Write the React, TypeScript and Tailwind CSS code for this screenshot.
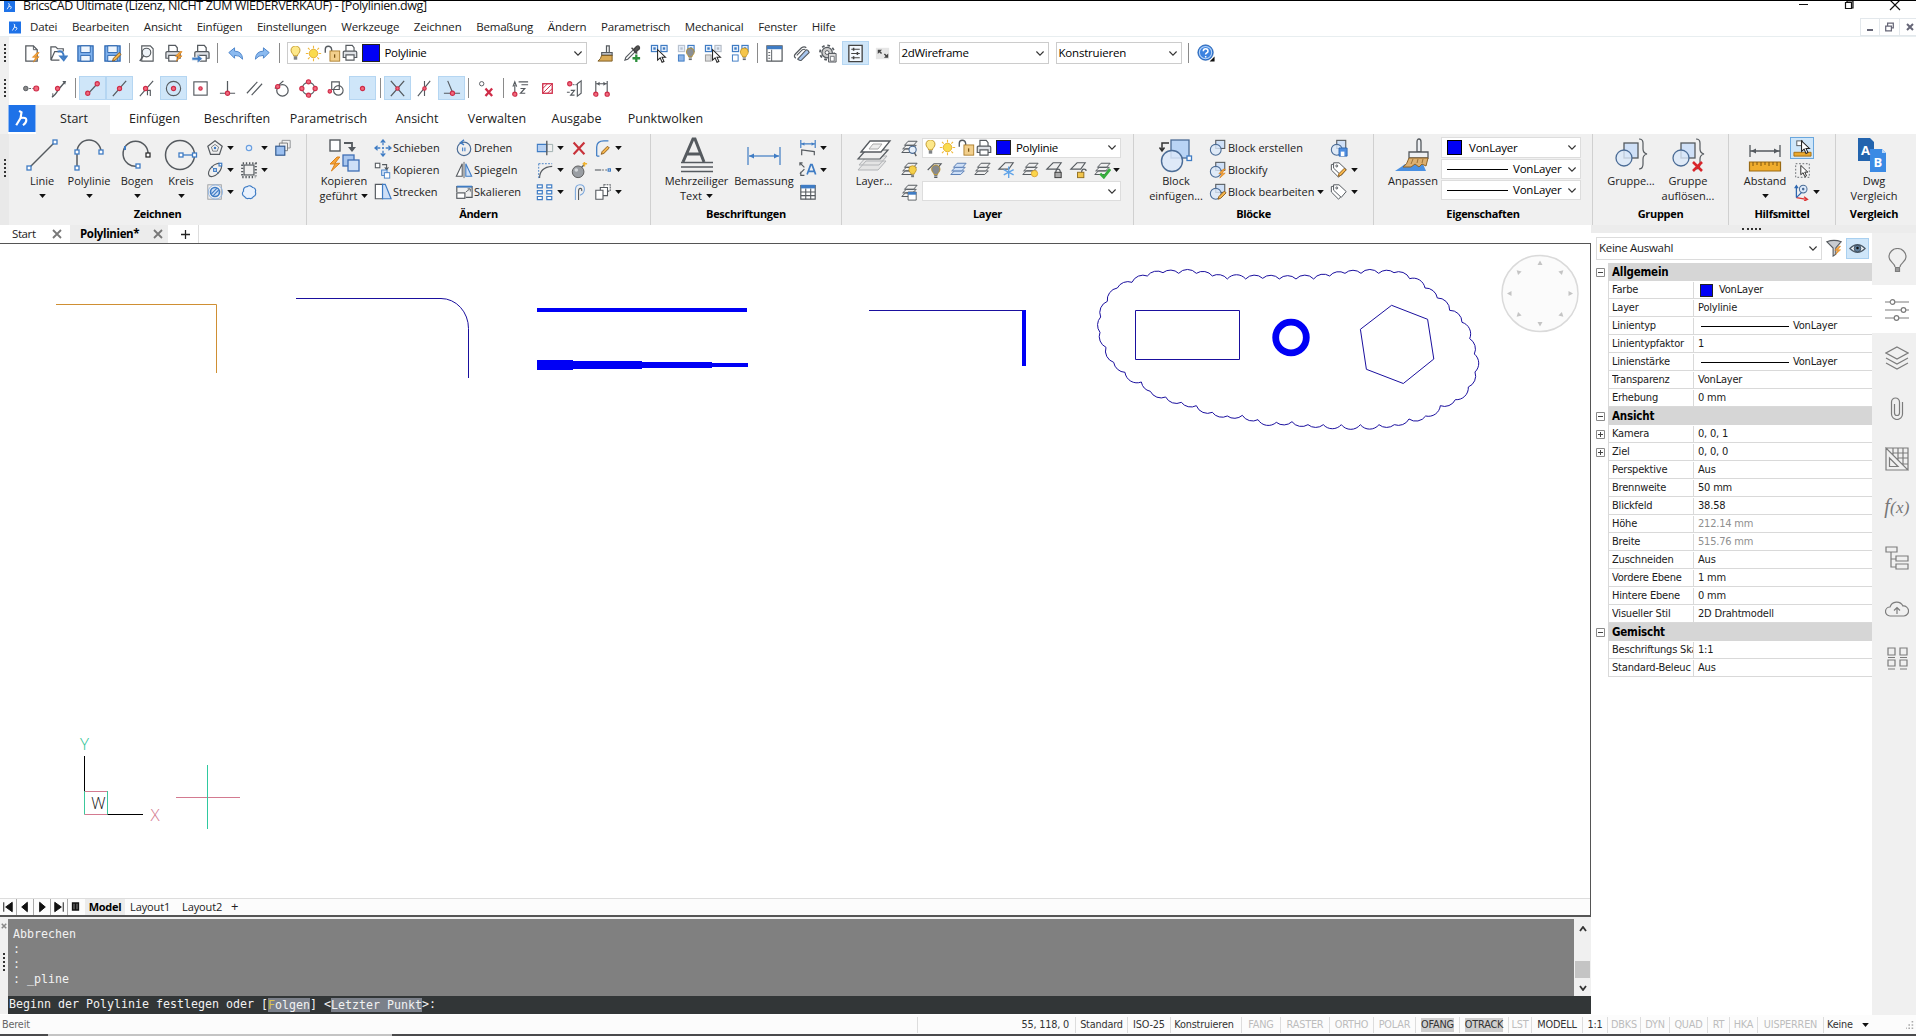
import { ReactNode } from "react";
import clsx from "clsx";

const G = "#555a5f"; // outline grey
const B = "#3f7cc4"; // accent blue
const L = "#cfe0f7"; // light fill
const R = "#cf2c48"; // snap red

const Dot = ({ x, y, r = 2.2 }: { x: number; y: number; r?: number }) => (
  <circle cx={x} cy={y} r={r} fill="#f06a7e" stroke={R} strokeWidth="1.2" />
);

const Grip = ({ x, y, s = 4 }: { x: number; y: number; s?: number }) => (
  <rect x={x - s / 2} y={y - s / 2} width={s} height={s} fill="#fff" stroke={B} strokeWidth="1.3" />
);

const Sheets = ({ c = G, fill = "none" }: { c?: string; fill?: string }) => (
  <g fill={fill} stroke={c} strokeWidth="1.1">
    <path d="M2 15l4-4h11l-4 4z" />
    <path d="M3 11l4-4h11l-4 4z" />
    <path d="M5 7l4-4.500h10l-4 4.500z" />
  </g>
);

const Bulb = ({ x = 10, y = 8, c = "#f5d04a", s = 1 }: { x?: number; y?: number; c?: string; s?: number }) => (
  <g transform={`translate(${x} ${y}) scale(${s})`}>
    <path d="M-2.200 4.500c0-2-3-3.200-3-6.500a5.200 5.200 0 0 1 10.400 0c0 3.300-3 4.500-3 6.500z" fill={c} stroke="#b98d1e" strokeWidth="1" />
    <path d="M-2 6h4M-2 8h4" stroke={G} strokeWidth="1.300" />
  </g>
);

const Cursor = ({ x = 9, y = 5 }: { x?: number; y?: number }) => (
  <path
    transform={`translate(${x} ${y})`}
    d="M0 0v11l2.700-2.400 2 4.600 2-.9-2-4.400h3.600z"
    fill="#fff"
    stroke="#222"
    strokeWidth="1.100"
  />
);

const Tiles = ({ a = B, b = B }: { a?: string; b?: string }) => (
  <g fill="#e4edf9" strokeWidth="1.200">
    <rect x="1.500" y="1.500" width="6.500" height="6.500" stroke={a} />
    <rect x="3.500" y="3.500" width="2.500" height="2.500" fill={a} stroke="none" />
    <rect x="11.500" y="1.500" width="6.500" height="6.500" stroke={b} />
    <rect x="13.500" y="3.500" width="2.500" height="2.500" fill={b} stroke="none" />
  </g>
);

const Bolt = ({ x, y, s = 1 }: { x: number; y: number; s?: number }) => (
  <path transform={`translate(${x} ${y}) scale(${s})`} d="M5 0L0 5h3.500L1 10l6-5.500H3.500L7 0z" fill="#f6a53a" stroke="#d9801a" strokeWidth=".7" />
);

const Pencil = ({ x, y }: { x: number; y: number }) => (
  <path transform={`translate(${x} ${y})`} d="M0 9l1-3 6-6 2 2-6 6z" fill="#f5b64c" stroke="#8a5a1c" strokeWidth="1" />
);

const PrinterShape = ({ x = 0, y = 0 }: { x?: number; y?: number }) => (
  <g transform={`translate(${x} ${y})`} fill="#fff" stroke={G} strokeWidth="1.300">
    <path d="M5 8V1.500h7L14 4v4" />
    <path d="M2 15V9.500Q2 8 3.500 8h12Q17 8 17 9.500V15z" fill="#dfe2e6" />
    <path d="M5 12h9v6H5z" />
  </g>
);

const Blk = () => (
  <g stroke={G} strokeWidth="1.200">
    <rect x="7.500" y="1.500" width="10" height="9" fill={L} />
    <circle cx="7.500" cy="12" r="6" fill="#dbe8f9" fillOpacity=".8" stroke="#4b6c96" />
  </g>
);

const Tag = () => (
  <g fill="#fff" stroke={G} strokeWidth="1.100">
    <path d="M1.500 4v6l8 8 6.500-7-8.500-8z" />
    <path d="M4 2v6l8.500 8 5.500-6.500L10 2z" />
    <circle cx="7.500" cy="5.500" r="1.100" />
  </g>
);

const Obj = () => (
  <>
    <rect x="11" y="6" width="14" height="15" fill={L} stroke={G} strokeWidth="1.300" />
    <circle cx="11" cy="21" r="8" fill="#dbe8f9" fillOpacity=".8" stroke="#4b6c96" strokeWidth="1.300" />
    <path d="M26 2q4 0 4 4v6q0 4 4 5-4 1-4 5v5q0 5-4 5" fill="none" stroke={G} strokeWidth="1.200" />
  </>
);

// 20x20 glyphs
const small: Record<string, ReactNode> = {
  new: (<><path d="M4 2h8l4 4v12H4z" fill="#fff" stroke={G} strokeWidth="1.300" /><path d="M12 2v4h4" fill="none" stroke={G} /><Bolt x={11} y={9} /></>),
  open: (<><path d="M2 17V3h5l2 2h6v3M2 17L6 8h8M2 17h9" fill="none" stroke={G} strokeWidth="1.300" /><path d="M9 8q7-2 6.500 7M12 13l3.500 4 3-4z" fill="none" stroke={B} strokeWidth="2" /></>),
  save: (<><path d="M2 2h16v16H2z" fill="#7fb2ee" stroke="#2c66b0" strokeWidth="1.300" /><path d="M5 2h10v7H5zM5 18v-6h10v6z" fill="#eef5fd" stroke="#2c66b0" /></>),
  saveas: (<><path d="M2 2h16v16H2z" fill="#7fb2ee" stroke="#2c66b0" strokeWidth="1.300" /><path d="M5 2h10v7H5zM5 18v-6h10v6z" fill="#eef5fd" stroke="#2c66b0" /><Pencil x={10} y={9} /></>),
  preview: (<><path d="M5 2h9l3 3v13H5z" fill="#fff" stroke={G} strokeWidth="1.200" /><circle cx="10" cy="9" r="4.500" fill="#eef3f8" stroke={G} strokeWidth="1.200" /><path d="M7 12l-4 6" stroke={G} strokeWidth="1.600" /></>),
  print: (<><PrinterShape /><Bolt x={12} y={8} /></>),
  export: (<><PrinterShape x={2} /><path d="M1 14h6v-3l5 4.500L7 20v-3H1z" fill={B} stroke="#fff" strokeWidth=".6" /></>),
  undo: <path d="M3 9l6-5v3.500q8 0 8.500 8.500-3.500-4.500-8.500-4V15z" fill="#8bbaf0" stroke="#4a83c9" strokeWidth="1" />,
  redo: <path d="M17 9l-6-5v3.500q-8 0-8.500 8.500 3.500-4.500 8.500-4V15z" fill="#8bbaf0" stroke="#4a83c9" strokeWidth="1" />,
  bulb: <Bulb x={10} y={8} c="#fde889" s={1.15} />,
  sun: (<><circle cx="10" cy="10" r="5" fill="#fadb4d" stroke="#e0a92a" /><path d="M10 1v3M10 16v3M1 10h3M16 10h3M3.500 3.500l2 2M14.500 14.500l2 2M16.500 3.500l-2 2M3.500 16.500l2-2" stroke="#f0b93c" strokeWidth="1.300" /></>),
  lock: (<><path d="M1.500 9V5q0-3.500 3.500-3.500T9 5v4" fill="none" stroke={G} strokeWidth="1.600" /><rect x="7" y="7" width="11.500" height="12" fill="#f2cf8c" stroke="#a87824" /><path d="M12.500 11v4" stroke="#7a5515" strokeWidth="1.500" /></>),
  printer: <PrinterShape x={0.5} />,
  brush: (<><path d="M11 2h3v7h-3z" fill="#eee" stroke={G} strokeWidth="1.200" /><path d="M6 9h11v3H6z" fill="#b9bdc2" stroke={G} strokeWidth="1.200" /><path d="M6 12h11v6H2q3-2 4-6z" fill="#d9aa55" stroke="#7d5b20" /></>),
  dropper: (<><path d="M2 17l1-3 8-8 2 2-8 8z" fill="#fff" stroke={G} strokeWidth="1.200" /><path d="M9 4l6 6M11 6l3-3q2-2 3 0t-1 3l-3 3z" fill="#555" stroke="#444" strokeWidth="1.500" /><path d="M14 11v8M10 15h8" stroke="#2d8f3c" strokeWidth="2.400" /></>),
  sel1: (<><Tiles /><Cursor x={8} y={6} /></>),
  sel2: (<><Tiles a="#b9c3d0" b={B} /><rect x="1.500" y="11.500" width="6" height="6.500" fill="#8db5e8" stroke={B} /><Bulb x={14} y={10} c="#8a8f95" s={0.8} /></>),
  sel3: (<><Tiles b="#b5bcc5" /><rect x="1.500" y="11.500" width="6" height="6.500" fill="#ddd" stroke="#999" /><Cursor x={9} y={6} /></>),
  sel4: (<><Tiles /><rect x="1.500" y="11.500" width="6" height="6.500" fill="#fff" stroke={B} /><Bulb x={14} y={10} c="#f5c54a" s={0.8} /></>),
  explorer: (<><path d="M2 2h16v16H2z" fill="#fff" stroke={G} strokeWidth="1.300" /><path d="M2 2h16v3.500H2z" fill={B} /><path d="M7 6v12M3.500 9h2M3.500 12h2M3.500 15h2" stroke={G} /></>),
  clip: (<><path d="M4 15q-3-2 0-5l6-6q3-2 5 0" fill="none" stroke={G} strokeWidth="1.300" /><path d="M6 16l9-10q2 0 3 3l-8 8q-2 1-4-1z" fill="#a8c6ee" stroke={G} strokeWidth="1.200" /><path d="M5 12l6-6q2-1 3 0" fill="none" stroke={G} strokeWidth="1.200" /></>),
  gear: (<><circle cx="8.500" cy="9" r="5.500" fill="#ccc" stroke={G} strokeWidth="1.300" /><circle cx="8.500" cy="9" r="7.500" fill="none" stroke={G} strokeWidth="1.800" strokeDasharray="2.900 3" /><circle cx="8.500" cy="9" r="2" fill="#fff" stroke={G} /><path d="M10 10h8v9h-8z" fill="#ddd" stroke={G} /><path d="M12 13h4v5h-4z" fill="#fff" stroke={G} strokeWidth=".8" /></>),
  props: (<><path d="M3 1.500h14v17H3z" fill="#f3f9ff" stroke="#444" strokeWidth="1.400" /><path d="M5.500 5.500h9M5.500 10h9M5.500 14.500h9" stroke="#444" strokeWidth="1.200" /><path d="M8 4v3M12 8.500v3M8 13v3" stroke="#444" strokeWidth="1.600" /></>),
  swap: (<><path d="M3 4h14v12H3z" fill="#e6e6e6" /><path d="M5 6h4.500L5 10.500zM16 14.500h-4.500L16 10z" fill="#444" /><path d="M6 7l3 3M15 13.500l-3-3" stroke="#444" strokeWidth="1.500" /></>),
  help: (<><circle cx="9.500" cy="9.500" r="8.500" fill="#3c83e0" stroke="#1f5cae" /><circle cx="9.500" cy="9.500" r="6.800" fill="none" stroke="#b9d5f7" strokeWidth="1.200" /><path d="M7 8q0-2.700 2.600-2.700T12.200 8q0 1.300-1.600 2-1 .5-1 1.800M9.600 13.300v1.600" fill="none" stroke="#fff" strokeWidth="1.700" /><path d="M19.500 14v5.500H14z" fill="#111" /></>),

  // entity snaps
  s1: (<><path d="M4 10h12" stroke={G} strokeDasharray="2 1.500" /><circle cx="4" cy="10" r="2.400" fill="#888" stroke={G} /><Dot x={15} y={10} r={2.600} /></>),
  s2: (<><path d="M3 19q3-1 7-8l6-7" fill="none" stroke={G} strokeWidth="1.400" /><path d="M14 2l4 0-1 4" fill={G} /><Dot x={9} y={10} /><path d="M4 15v4" stroke={G} /></>),
  s3: (<><path d="M5 16L15 5" stroke={G} strokeWidth="1.300" /><Dot x={5} y={15} /><Dot x={15} y={5} /></>),
  s4: (<><path d="M3 18L17 2" stroke={G} strokeWidth="1.300" /><Dot x={10} y={10} /></>),
  s5: (<><path d="M3 18L17 2M7 12h7v6M11 12v5" stroke={G} strokeWidth="1.200" fill="none" /><Dot x={9} y={10} /></>),
  s6: (<><circle cx="10" cy="10" r="7.500" fill="none" stroke={G} strokeWidth="1.200" /><Dot x={10} y={10} /></>),
  s7: (<><rect x="3" y="3" width="14" height="14" fill="none" stroke={G} strokeWidth="1.200" /><Dot x={10} y={10} r={1.800} /></>),
  s8: (<><path d="M10 2v13M2 15h16" stroke={G} strokeWidth="1.300" /><Dot x={10} y={15} /></>),
  s9: <path d="M2 15L13 3M7 17L18 5" stroke={G} strokeWidth="1.200" />,
  s10: (<><circle cx="11" cy="12" r="6" fill="none" stroke={G} strokeWidth="1.300" /><path d="M3 10l9-8" stroke={G} strokeWidth="1.300" /><Dot x={6} y={8} /></>),
  s11: (<><circle cx="10" cy="10" r="6.500" fill="none" stroke={G} strokeWidth="1.200" /><Dot x={10} y={3} /><Dot x={10} y={17} /><Dot x={3} y={10} /><Dot x={17} y={10} /></>),
  s12: (<><path d="M6 3h8v8H6z" fill="none" stroke={G} strokeWidth="1.200" /><circle cx="13" cy="12" r="5" fill="none" stroke={G} strokeWidth="1.200" /><Dot x={4} y={13} r={1.800} /></>),
  s13: <Dot x={10} y={10} />,
  s14: (<><path d="M3 2l14 16M17 2L3 18" stroke={G} strokeWidth="1.400" /><Dot x={10} y={10} r={1.800} /></>),
  s15: (<><path d="M3 18L16 2M10 2v16" stroke={G} strokeWidth="1.200" /><Dot x={10} y={10} r={1.800} /></>),
  s16: (<><path d="M6 2l5 12M2 15h17" stroke={G} strokeWidth="1.200" /><Dot x={11} y={15} /></>),
  s17: (<><circle cx="6" cy="5" r="2.300" fill="#fff" stroke={G} /><path d="M10 10l7 8M17 10l-7 8" stroke={R} strokeWidth="2.400" /></>),
  s18: (<><path d="M4 17V6M2 8l2-5 2 5M8 3h10M11 6h7M10 10h4.500l-4.500 5h5" fill="none" stroke={G} strokeWidth="1.200" /><Dot x={4} y={16} /></>),
  s19: (<><rect x="5" y="5" width="10" height="10" fill="#fff" stroke={R} strokeWidth="1.400" /><path d="M5 10l5-5M5 15L15 5M10 15l5-5" stroke={R} /></>),
  s20: (<><Dot x={5} y={5} /><path d="M8 6h6" stroke={G} strokeDasharray="2 1" /><path d="M2 14h3M6 12h4l-4 5h4M13 5l4-3v13l-4 3z" fill="none" stroke={G} strokeWidth="1.200" /></>),
  s21: (<><path d="M4 2v15M16 2v15M4 5h12" stroke={G} strokeWidth="1.200" /><path d="M5 5l3-2v4zM15 5l-3-2v4z" fill={G} /><Dot x={4} y={16} /><Dot x={16} y={16} /></>),

  // ribbon, draw
  polygon: (<><path d="M10 2l8 6-3 9H5L2 8z" fill="none" stroke={G} strokeWidth="1.300" /><path d="M10 6l4 3-1.500 4.500h-5L6 9z" fill="none" stroke={G} strokeWidth=".8" /><circle cx="10" cy="10" r="1.400" fill={B} /></>),
  ellipse: (<><ellipse cx="10" cy="10" rx="9" ry="5" transform="rotate(-45 10 10)" fill="none" stroke={G} strokeWidth="1.300" /><path d="M6 6l8 8" stroke={B} /><Grip x={10} y={10} s={3} /><Grip x={16} y={4} s={3} /></>),
  hatch: (<><rect x="2" y="2" width="15" height="16" fill="none" stroke="#9a9da1" /><circle cx="10" cy="10" r="5" fill={L} stroke={B} strokeWidth="1.800" /><path d="M6 12l6-6M8 14l6-6" stroke={B} strokeWidth="1.300" /><circle cx="10.500" cy="10" r="8" fill="none" stroke="#8fb4e4" /></>),
  point: <circle cx="10" cy="10" r="3" fill="#e6f0fc" stroke="#6a9fe0" strokeWidth="1.300" />,
  bound: (<><rect x="4.500" y="4.500" width="11" height="11" fill="none" stroke={G} strokeWidth="1.300" /><path d="M3 2.500h14.500V17" fill="none" stroke={G} strokeWidth="2.500" strokeDasharray="1.500 2" /><path d="M2.500 4v14H17" fill="none" stroke={G} strokeWidth="2.500" strokeDasharray="1.500 2" /></>),
  revcloud: <path d="M5 15a3.500 3.500 0 0 1-1-6 4 4 0 0 1 4-5 4 4 0 0 1 6 1 3.500 3.500 0 0 1 3 5 3.500 3.500 0 0 1-2 5 4 4 0 0 1-5 2 4 4 0 0 1-5-2z" fill="#eaf2fd" stroke={B} strokeWidth="1.300" />,
  region: (<><path d="M9 5V1.500h9V10h-3" fill="none" stroke="#8a8d91" /><path d="M6 8V4.500h9V13h-3" fill="none" stroke="#777" /><rect x="2" y="8" width="10" height="10" fill="#9cc0f0" stroke="#31598f" strokeWidth="1.300" /></>),

  // modify
  move: <path d="M10 1v6M10 13v6M1 10h6M13 10h6M7.500 4L10 1l2.500 3M7.500 16l2.500 3 2.500-3M4 7.500L1 10l3 2.500M16 7.500l3 2.500-3 2.500M9 10h2M10 9v2" fill="none" stroke={B} strokeWidth="1.400" />,
  copy: (<><rect x="1.500" y="2.500" width="5" height="5" fill="#fff" stroke={G} strokeWidth="1.200" /><path d="M9 4h5v5M12 7l2 3 2-3" fill="none" stroke={G} strokeWidth="1.200" /><rect x="8.500" y="10" width="6" height="6" fill={L} stroke={B} /><rect x="11.500" y="13" width="6" height="6" fill="#fff" stroke={B} /></>),
  stretch: (<><path d="M1.500 1.500h8v16h-8z" fill="#fff" stroke={G} strokeWidth="1.300" /><path d="M9.500 1.500h3l6.500 16H9.500z" fill={L} stroke={B} strokeWidth="1.300" /></>),
  rotate: (<><circle cx="10" cy="11" r="7.500" fill="none" stroke="#4b6c96" strokeWidth="1.300" /><path d="M10 1l-4 3 4 2.500" fill="none" stroke={B} strokeWidth="1.500" /><path d="M8.500 9.500v4M11 9.500v4" stroke={B} strokeWidth="1.200" /></>),
  mirror: (<><path d="M8 3v14H1.500z" fill="#fff" stroke={G} strokeWidth="1.200" /><path d="M12 3v14h6.500z" fill={L} stroke={B} strokeWidth="1.200" /><path d="M10 1v18" stroke={G} /></>),
  scale: (<><path d="M2 10V4h17v12h-7" fill="none" stroke={G} strokeWidth="1.300" /><path d="M2 3h17v2H2z" fill={B} /><rect x="2" y="11" width="9" height="6" fill="#fff" stroke={G} strokeWidth="1.300" /><path d="M12 10l4-3M14 6.500h3v3" fill="none" stroke={G} /></>),
  trim: (<><path d="M1.500 6h10.500v8H1.500z" fill="#b6d0f2" stroke={B} strokeWidth="1.200" /><path d="M12 6h6.500v8H12" fill="none" stroke="#9aa" /><path d="M12 2v16" stroke={G} strokeWidth="1.500" /></>),
  erase: <path d="M4 4l12 13M16 4L4 17" stroke="#c8323a" strokeWidth="2.400" />,
  editpl: (<><path d="M3 19V9q0-7 8-7h5M3 19h3" fill="none" stroke={B} strokeWidth="1.400" /><Pencil x={8} y={8} /></>),
  fillet: (<><path d="M4 19q0-12 14-13" fill="none" stroke={G} strokeWidth="1.300" /><path d="M3 19V3M3 3h15" stroke={B} strokeDasharray="2 1.500" /></>),
  bomb: (<><circle cx="9" cy="12" r="6.500" fill="#9a9ea3" stroke="#555" /><circle cx="7" cy="10" r="2" fill="#d4d7da" /><path d="M13 7l3-3" stroke={G} strokeWidth="1.500" /><path d="M16 1v5M14 3h5" stroke="#f1b32f" strokeWidth="1.800" /></>),
  lengthen: (<><path d="M1 10h7" stroke={G} strokeWidth="1.200" /><path d="M9 10h6" stroke={G} strokeDasharray="2 1.500" /><Grip x={17} y={10} s={2.500} /></>),
  array: (<g fill="#fff" stroke={B} strokeWidth="1.300"><path d="M1.500 2h5.500v3.500H1.500zM12 2h5.500v3.500H12zM1.500 8.500h5.500V12H1.500zM12 8.500h5.500V12H12zM1.500 15h5.500v3.500H1.500zM12 15h5.500v3.500H12z" /></g>),
  offset: (<><path d="M6 19V8q0-6 5-6t5 5q0 5-5 6.500" fill="none" stroke="#7ba7dc" strokeWidth="1.200" /><path d="M9.500 19V9q0-3 2-3t1.500 3" fill="none" stroke={G} strokeWidth="1.200" /></>),
  order: (<g fill="#fff" stroke={G} strokeWidth="1.200"><path d="M11 2h7v7h-7z" strokeDasharray="2 1" /><path d="M7 5h8v9H7z" /><path d="M2 8h8v10H2z" /></g>),

  // annotate
  dimlin: (<><path d="M2 1v9M18 1v9M2 5.500h16" stroke={B} strokeWidth="1.300" /><path d="M3 5.500l3-2v4zM17 5.500l-3-2v4z" fill={B} /><path d="M3 18v-6l14 2v4" fill="none" stroke={G} strokeWidth="1.300" /></>),
  scaletext: (<><path d="M1 5V2h3M1 2l5 5M1 14l5-5M6 16H2v-4" stroke={G} fill="none" strokeWidth="1.300" /><path d="M9 15l4-11h1.500l4 11M10.500 11.500h6.500" stroke={B} strokeWidth="1.900" fill="none" /></>),
  table: (<><path d="M2 3h16v15H2z" fill="#fff" stroke={G} strokeWidth="1.300" /><path d="M2 2h16v4H2z" fill={B} /><path d="M2 10h16M2 14h16M7.500 6v12M13 6v12" stroke={G} strokeWidth="1.200" /></>),

  // layers
  lprev: (<><Sheets /><circle cx="14" cy="12" r="4" fill="#e7f0fb" stroke="#4b6c96" strokeWidth="1.200" /><path d="M16 15l2 4" stroke={G} strokeWidth="1.500" /></>),
  lstate: (<><Sheets /><path d="M9 10h9v9H9z" fill="#fff" stroke={G} /><path d="M9 10h9v3H9z" fill={B} /></>),
  lon: (<><Sheets /><Bulb x={14} y={11} s={0.8} /></>),
  loff: (<><path d="M3 10l7-7h8l-4 5" fill="none" stroke={G} strokeWidth="1.200" /><Bulb x={12} y={11} c="#85898e" s={0.9} /></>),
  liso: <Sheets c="#5b7fb5" fill="#cfe0f7" />,
  luniso: <Sheets fill="#f0f0f0" />,
  lfreeze: (<><path d="M2 9l7-7h9l-5 7z" fill="none" stroke={G} strokeWidth="1.200" /><path d="M13 6v13M7.500 9.500l11 6M18.500 9.500l-11 6" stroke="#5fa3e8" strokeWidth="1.500" /></>),
  lthaw: (<><Sheets /><circle cx="15" cy="14" r="3.500" fill="#fbd54b" stroke="#dba22c" /></>),
  llock: (<><path d="M2 9l7-7h9l-5 7z" fill="none" stroke={G} strokeWidth="1.200" /><path d="M12 13q0-4 2.500-4t2.500 4" fill="none" stroke={G} strokeWidth="1.300" /><rect x="11" y="12.500" width="7" height="6" fill="#aaa" stroke="#333" /></>),
  lunlock: (<><path d="M2 9l7-7h9l-5 7z" fill="none" stroke={G} strokeWidth="1.200" /><path d="M14 13q0-4 2.500-4t2.500 2" fill="none" stroke={G} strokeWidth="1.300" /><rect x="9.500" y="12.500" width="7" height="6" fill="#f2c54c" stroke="#8d6a1c" /></>),
  lcur: (<><Sheets /><path d="M8 14l4 4 7-9" fill="none" stroke="#35ad3c" strokeWidth="3" /></>),

  // blocks
  bcreate: <Blk />,
  blockify: (<><Blk /><Bolt x={11} y={9} /></>),
  bedit: (<><Blk /><Pencil x={10} y={9} /></>),
  bsave: (<><Blk /><path d="M10 10h9v9h-9z" fill="#4f8ee0" stroke="#2c66b0" /><path d="M12 14h4v5h-4z" fill="#fff" /></>),
  tagedit: (<><Tag /><Pencil x={9} y={8} /></>),
  tag: <Tag />,

  // utilities
  quick: (<><rect x="4" y="2" width="6" height="5" fill="#fff" stroke={G} /><path d="M1 14h18v4H1z" fill="#eaa92f" stroke="#a86f11" /><Cursor x={9} y={2} /></>),
  selbox: (<><path d="M2 2h16v16H2z" fill="none" stroke={G} strokeDasharray="2 2" /><Cursor x={8} y={4} /></>),
  ucs: (<><path d="M4 3v13M2 5l2-3 2 3" fill="none" stroke="#2c66b0" strokeWidth="1.500" /><path d="M4 16l12 2M13 15l4 3-4 2" fill="none" stroke="#d33" strokeWidth="1.600" /><path d="M4 16l6-6" stroke="#2c66b0" strokeWidth="1.300" /><circle cx="12" cy="6" r="4.500" fill="#dce9fa" stroke="#4b6c96" strokeWidth="1.200" /><circle cx="12" cy="6" r="1.500" fill="#4b6c96" /></>),
  filter: (<><path d="M2 3q8-3 16 0l-6 7v7l-3 2v-9z" fill="#c9ccd0" stroke={G} strokeWidth="1.200" /><Bolt x={11} y={8} s={0.9} /></>),
  eye: (<><path d="M1 10q9-9 18 0-9 9-18 0z" fill="#f4f8fc" stroke="#4c5a68" strokeWidth="1.300" /><circle cx="10" cy="10" r="4" fill="#5f7d9a" stroke="#3a4a5a" /><circle cx="10" cy="9.500" r="1.500" fill="#111" /></>),
};

// 36x36 glyphs
const big: Record<string, ReactNode> = {
  line: (<><path d="M5 31L31 5" stroke={G} strokeWidth="1.500" /><Grip x={5} y={31} /><Grip x={31} y={5} /></>),
  pline: (<><path d="M6 31V15a12 12 0 0 1 24 0" fill="none" stroke={G} strokeWidth="1.500" /><Grip x={6} y={31} /><Grip x={6} y={15} /><Grip x={30} y={15} /></>),
  arc: (<><path d="M19 29A12.500 12.500 0 1 1 29 18" fill="none" stroke={G} strokeWidth="1.500" /><Grip x={19} y={29} /><rect x="27" y="16" width="4" height="4" fill="#fff" stroke="#222" strokeWidth="1.200" /><path d="M6 9v4" stroke={B} strokeWidth="2" /></>),
  circle: (<><circle cx="17" cy="18" r="14.500" fill="none" stroke={G} strokeWidth="1.500" /><path d="M18 18h14" stroke={B} strokeWidth="1.300" /><Grip x={18} y={18} /><Grip x={31.5} y={18} /></>),
  copyg: (<><rect x="4" y="3" width="10" height="11" fill="#fff" stroke={G} strokeWidth="1.400" /><path d="M18 6h8v6" fill="none" stroke={G} strokeWidth="1.800" /><path d="M22 10h8l-4 5z" fill={G} /><rect x="17" y="18" width="11" height="11" fill="#a8c6ee" stroke="#3f6fb5" strokeWidth="1.300" /><rect x="22" y="23" width="11" height="11" fill={L} stroke="#3f6fb5" strokeWidth="1.300" /><Bolt x={4} y={20} s={1.400} /></>),
  mtext: (<><path d="M4 25L14 2h2l9 23M8 17h14" fill="none" stroke={G} strokeWidth="3" /><path d="M2 25.500h32M2 30h32M2 34.500h32" stroke={G} strokeWidth="1.300" /></>),
  dim: (<><path d="M2 10v18M34 10v18" stroke={B} strokeWidth="1.200" /><path d="M3 19h30" stroke={B} strokeWidth="1.200" /><path d="M3 19l5-2.500v5zM33 19l-5-2.500v5z" fill={B} /></>),
  layers: (<><g fill="#e4e4e4" stroke="#b2b4b7"><path d="M2 33l8-9h20l-8 9zM3 28l8-9h20l-8 9z" /></g><path d="M2 22l8-9h22l-8 9z" fill="#f0f0f0" stroke={G} strokeWidth="1.200" /><path d="M5 15l9-11h20l-9 11z" fill="#fff" stroke={G} strokeWidth="1.300" /><path d="M13 12l4-5h9l-4 5z" fill="#ededed" stroke="#aaa" /></>),
  insert: (<><rect x="13" y="3" width="18" height="18" fill="#b9d4f5" stroke="#4b6c96" strokeWidth="1.300" /><circle cx="14" cy="24" r="10.500" fill="#dbe8f9" fillOpacity=".85" stroke="#4b6c96" strokeWidth="1.400" /><path d="M11 6H4v7M1.500 10.500L4 14l2.500-3.500" fill="none" stroke="#333" strokeWidth="1.500" /><rect x="29" y="19" width="4.500" height="4.500" fill="#fff" stroke={B} strokeWidth="1.300" /></>),
  match: (<><path d="M0 34h31l-3-7H10l-4 3z" fill="#4a90e2" /><path d="M22 5q0-3 2-3t2 3v10h-4z" fill="#eef0f3" stroke={G} strokeWidth="1.300" /><path d="M14 15h19v6H14z" fill="#eef0f3" stroke={G} strokeWidth="1.300" /><path d="M14 21h19l-2 8-4-2-3 3-4-3-4 3H8q4-2 6-9z" fill="#ddb070" stroke="#8d6327" /><path d="M18 22l-2 5M23 22l-1 4M28 22l-1 4" stroke="#8d6327" strokeWidth=".8" /></>),
  group: <Obj />,
  ungroup: (<><Obj /><path d="M23 25l9 9M32 25l-9 9" stroke="#d9252a" strokeWidth="2.600" /></>),
  measure: (<><path d="M3 8v12M33 8v12M3 14h30" stroke={G} strokeWidth="1.300" /><path d="M4 14l5-2.500v5zM32 14l-5-2.500v5z" fill={G} /><path d="M2.500 25h31v9h-31z" fill="#f0ad2d" stroke="#9a6a14" strokeWidth="1.200" /><path d="M6 25v4M10 25v3M14 25v4M18 25v3M22 25v4M26 25v3M30 25v4" stroke="#7d5510" /></>),
  compare: (<><path d="M2 1h12l4 4v19H2z" fill="#2364ae" /><path d="M14 12h12l4 4v19H14z" fill="#3b8ae4" /><path d="M26 12v4h4z" fill="#bcd8f8" /><g fill="#fff" fontFamily="Open Sans, sans-serif" fontWeight="700" fontSize="13"><text x="5" y="18">A</text><text x="17.500" y="30">B</text></g></>),
};

const Icon = ({ n, className = "size-5" }: { n: string; className?: string }) => (
  <svg viewBox="0 0 20 20" className={clsx("shrink-0", className)}>{small[n]}</svg>
);

const Caret = ({ className = "" }: { className?: string }) => (
  <svg viewBox="0 0 10 6" className={clsx("h-[4px] w-[7px] shrink-0", className)}><path d="M0 0h10L5 6z" fill="#111" /></svg>
);

const Chevron = () => (
  <svg viewBox="0 0 10 6" className="mr-1 h-[5px] w-2 shrink-0"><path d="M.5.5L5 5 9.500.5" fill="none" stroke="#333" strokeWidth="1.400" /></svg>
);

const Logo = ({ className }: { className: string }) => (
  <svg viewBox="0 0 28 28" className={clsx("shrink-0", className)}>
    <path d="M0 0h28v28H0z" fill="#1e72e8" />
    <path d="M11 6l2.500 1.500-1 6L8 21M12.500 13.500q6-1 6 2 0 3-3.500 5.500" fill="none" stroke="#fff" strokeWidth="2.200" />
  </svg>
);

const Sep = ({ className }: { className: string }) => (
  <div className={clsx("flex shrink-0 justify-center", className)}><div className="h-5 w-px bg-[#8a8a8a]" /></div>
);

const Tools = ({ items, active = [] }: { items: string[]; active?: string[] }) => (
  <>
    {items.map((n) => (
      <div
        key={n}
        className={clsx(
          "flex h-[24px] w-[27px] shrink-0 items-center justify-center border",
          active.includes(n) ? "border-[#b5d6f2] bg-[#cfe6f9]" : "border-transparent"
        )}
      >
        <Icon n={n} className="size-[19px]" />
      </div>
    ))}
  </>
);

const DotsV = ({ className = "" }: { className?: string }) => (
  <div className={clsx("w-0 border-l-2 border-dotted border-[#333]", className)} />
);

const menu = ["Datei", "Bearbeiten", "Ansicht", "Einfügen", "Einstellungen", "Werkzeuge", "Zeichnen", "Bemaßung", "Ändern", "Parametrisch", "Mechanical", "Fenster", "Hilfe"];

const MenuBar = () => (
  <div className="flex h-[18px] items-center pl-[9px] text-[11.5px] tracking-[-0.17px] text-[#222]">
    <Logo className="mr-[9px] h-[15px] w-3" />
    <div className="flex gap-[14.6px] pb-px">
      {menu.map((m) => <span key={m}>{m}</span>)}
    </div>
    <div className="ml-auto flex h-full divide-x divide-[#e3e8ec] border border-r-0 border-[#e3e8ec]">
      <div className="flex w-[19px] items-end justify-center pb-1"><div className="h-0.5 w-1.5 bg-[#667]" /></div>
      <svg viewBox="0 0 20 16" className="w-[20px]"><path d="M6 7h6v5H6zM8 7V4h6v5h-2" fill="none" stroke="#667" strokeWidth="1.300" /></svg>
      <svg viewBox="0 0 16 16" className="w-[16px]"><path d="M7 5l6 6M13 5l-6 6" stroke="#667" strokeWidth="2" /></svg>
    </div>
  </div>
);

const LayerState = ({ wide }: { wide?: boolean }) => (
  <>
    <Icon n="bulb" className={wide ? "w-[15px]" : "w-[15px]"} />
    <Icon n="sun" className={wide ? "ml-0.5 w-[17px]" : "ml-px w-[17px]"} />
    <Icon n="lock" className={wide ? "ml-0.5 w-[17px]" : "ml-0.5 w-[17px]"} />
    <Icon n="printer" className="w-[18px]" />
    <div className={clsx("shrink-0 border border-[#222] bg-[#0000f5]", wide ? "ml-[3px] h-[18px] w-[18px]" : "ml-[3px] h-[15px] w-[15px]")} />
  </>
);

const Toolbars = () => (
  <div className="flex h-[69px] border-t border-[#e8eef0]">
    <div className="flex w-[9px] shrink-0 flex-col items-center gap-[17px] bg-[#f0f0f0] pt-[7px]">
      <DotsV className="h-[18px]" />
      <DotsV className="h-[18px]" />
    </div>
    <div className="flex flex-col pl-[8.5px] text-[11.5px] tracking-[-0.3px] text-black">
      <div className="flex h-[32px] shrink-0 items-center">
        <Tools items={["new", "open", "save", "saveas"]} />
        <Sep className="w-[7px]" />
        <Tools items={["preview", "print", "export"]} />
        <Sep className="w-2" />
        <Tools items={["undo", "redo"]} />
        <Sep className="w-[8px]" />
        <div className="ml-[3px] flex h-[22px] w-[300px] items-center border border-[#ccc] bg-white">
          <LayerState wide />
          <span className="ml-[5px] flex-1">Polylinie</span>
          <Chevron />
        </div>
        <div className="ml-[5px] flex items-center">
          <Tools items={["brush", "dropper", "sel1", "sel2", "sel3", "sel4"]} />
          <Sep className="w-[7px]" />
          <Tools items={["explorer", "clip", "gear", "props"]} active={["props"]} />
          <Tools items={["swap"]} />
        </div>
        <div className="ml-[3px] flex h-[22px] w-[150px] items-center border border-[#ccc] bg-white pl-0.5">
          <span className="flex-1">2dWireframe</span>
          <Chevron />
        </div>
        <div className="ml-[7px] flex h-[22px] w-[126px] items-center border border-[#ccc] bg-white pl-0.5 tracking-[-0.200px]">
          <span className="flex-1">Konstruieren</span>
          <Chevron />
        </div>
        <Sep className="w-[13px]" />
        <Icon n="help" className="ml-[2px] size-[18px]" />
      </div>
      <div className="flex h-[38px] shrink-0 items-center">
        <Tools items={["s1", "s2"]} />
        <Sep className="w-[7.5px]" />
        <Tools items={["s3", "s4", "s5", "s6", "s7", "s8", "s9", "s10", "s11", "s12", "s13"]} active={["s3", "s4", "s6", "s13"]} />
        <Sep className="w-[8px]" />
        <Tools items={["s14", "s15", "s16"]} active={["s14", "s16"]} />
        <Sep className="w-[7px]" />
        <Tools items={["s17"]} />
        <Sep className="w-[8px]" />
        <Tools items={["s18", "s19", "s20", "s21"]} />
      </div>
    </div>
  </div>
);

const ribbonTabs: [string, string][] = [
  ["Start", "w-[74px] bg-[#f0f0f0] pl-0.5"],
  ["Einfügen", "w-[89px]"],
  ["Beschriften", "w-[76px]"],
  ["Parametrisch", "w-[107px]"],
  ["Ansicht", "w-[70px]"],
  ["Verwalten", "w-[90px]"],
  ["Ausgabe", "w-[69px]"],
  ["Punktwolken", "w-[109px]"],
];

const Big = ({ icon, label, label2, caret, className }: { icon: string; label: string; label2?: string; caret?: boolean; className: string }) => (
  <div className={clsx("flex shrink-0 flex-col items-center leading-[15px] whitespace-nowrap", className)}>
    <svg viewBox="0 0 36 36" className="size-9 shrink-0">{big[icon]}</svg>
    <span>{label}</span>
    {(label2 || caret) && (
      <span className="flex h-[15px] items-center gap-1">
        {label2}
        {caret && <Caret />}
      </span>
    )}
  </div>
);

type Cell = { i?: string; t?: string; caret?: boolean };

const Col = ({ cells, className }: { cells: Cell[]; className: string }) => (
  <div className={clsx("flex shrink-0 flex-col", className)}>
    {cells.map((c, k) => (
      <div key={k} className="flex h-[22px] items-center whitespace-nowrap">
        {c.i && <Icon n={c.i} className="size-[18px]" />}
        {c.t && <span className="ml-px">{c.t}</span>}
        {c.caret && <Caret className="ml-[3px]" />}
      </div>
    ))}
  </div>
);

const Panel = ({ title, className, pad, children }: { title: string; className: string; pad: string; children: ReactNode }) => (
  <div className={clsx("flex shrink-0 flex-col border-r border-[#d0d0d0] pt-[3px]", className)}>
    <div className={clsx("flex h-[67px]", pad)}>{children}</div>
    <div className="text-center text-[11px] leading-[19px] font-bold tracking-[-0.3px] text-black">{title}</div>
  </div>
);

const Ribbon = () => (
  <div className="flex h-[91px] bg-[#f0f0f0] text-[11px] text-[#222]">
    <div className="flex w-[9px] shrink-0 items-center justify-center bg-[#e9e9e9] pb-6"><DotsV className="h-[18px]" /></div>
    <Panel title="Zeichnen" className="w-[298px]" pad="pl-[10px]">
      <Big icon="line" label="Linie" caret className="w-[46px]" />
      <Big icon="pline" label="Polylinie" caret className="w-[48px]" />
      <Big icon="arc" label="Bogen" caret className="w-[48px]" />
      <Big icon="circle" label="Kreis" caret className="w-[40px]" />
      <Col className="ml-[5px] w-[34px]" cells={[{ i: "polygon", caret: true }, { i: "ellipse", caret: true }, { i: "hatch", caret: true }]} />
      <Col className="w-[34px]" cells={[{ i: "point", caret: true }, { i: "bound", caret: true }, { i: "revcloud" }]} />
      <Col className="w-5" cells={[{ i: "region" }]} />
    </Panel>
    <Panel title="Ändern" className="w-[344px]" pad="pl-3">
      <Big icon="copyg" label="Kopieren" label2="geführt" caret className="w-[50px]" />
      <Col className="ml-[5px] w-[81px]" cells={[{ i: "move", t: "Schieben" }, { i: "copy", t: "Kopieren" }, { i: "stretch", t: "Strecken" }]} />
      <Col className="w-[81px]" cells={[{ i: "rotate", t: "Drehen" }, { i: "mirror", t: "Spiegeln" }, { i: "scale", t: "Skalieren" }]} />
      <Col className="w-[34px]" cells={[{ i: "trim", caret: true }, { i: "fillet", caret: true }, { i: "array", caret: true }]} />
      <Col className="w-[24px]" cells={[{ i: "erase" }, { i: "bomb" }, { i: "offset" }]} />
      <Col className="w-[34px]" cells={[{ i: "editpl", caret: true }, { i: "lengthen", caret: true }, { i: "order", caret: true }]} />
    </Panel>
    <Panel title="Beschriftungen" className="w-[191px]" pad="pl-[12px]">
      <Big icon="mtext" label="Mehrzeiliger" label2="Text" caret className="w-[67px]" />
      <Big icon="dim" label="Bemassung" className="w-[68px]" />
      <Col className="ml-px w-[34px]" cells={[{ i: "dimlin", caret: true }, { i: "scaletext", caret: true }, { i: "table" }]} />
    </Panel>
    <Panel title="Layer" className="w-[292px]" pad="pl-[12px]">
      <Big icon="layers" label="Layer..." className="w-[40px]" />
      <Col className="ml-[6px] w-[22px]" cells={[{ i: "lprev" }, { i: "lon" }, { i: "lstate" }]} />
      <div className="flex w-[199px] flex-col">
        <div className="flex h-[22px] items-center pb-px">
          <div className="flex h-5 w-full items-center border border-[#ddd] bg-white text-[11.500px] tracking-[-0.3px] text-black">
            <LayerState />
            <span className="ml-[5px] flex-1">Polylinie</span>
            <Chevron />
          </div>
        </div>
        <div className="flex h-[22px] items-center gap-[6px] pl-[3px]">
          {["loff", "liso", "luniso", "lfreeze", "lthaw", "llock", "lunlock", "lcur"].map((n) => <Icon key={n} n={n} className="size-[18px]" />)}
          <Caret className="-ml-1" />
        </div>
        <div className="flex h-5 items-center justify-end border border-[#ddd] bg-white"><Chevron /></div>
      </div>
    </Panel>
    <Panel title="Blöcke" className="w-[240px]" pad="pl-[14px]">
      <Big icon="insert" label="Block" label2="einfügen..." className="w-[56px]" />
      <Col className="ml-[5px] w-[121px]" cells={[{ i: "bcreate", t: "Block erstellen" }, { i: "blockify", t: "Blockify" }, { i: "bedit", t: "Block bearbeiten", caret: true }]} />
      <Col className="w-[34px]" cells={[{ i: "bsave" }, { i: "tagedit", caret: true }, { i: "tag", caret: true }]} />
    </Panel>
    <Panel title="Eigenschaften" className="w-[219px]" pad="pl-[13px]">
      <Big icon="match" label="Anpassen" className="w-[52px]" />
      <div className="ml-0.5 flex w-[140px] flex-col gap-px text-[11.5px] text-black">
        <div className="flex h-[21px] items-center border border-[#ddd] bg-white pl-[5px]">
          <div className="size-[15px] border border-black bg-[#0000f5]" />
          <span className="ml-[7px] flex-1 tracking-[-0.2px]">VonLayer</span>
          <Chevron />
        </div>
        {[0, 1].map((k) => (
          <div key={k} className="flex h-5 items-center border border-[#ddd] bg-white pl-[5px]">
            <div className="h-px w-[61px] bg-black" />
            <span className="ml-[5px] flex-1 tracking-[-0.2px]">VonLayer</span>
            <Chevron />
          </div>
        ))}
      </div>
    </Panel>
    <Panel title="Gruppen" className="w-[136px]" pad="pl-[11px]">
      <Big icon="group" label="Gruppe..." className="w-[54px]" />
      <Big icon="ungroup" label="Gruppe" label2="auflösen..." className="w-[60px]" />
    </Panel>
    <Panel title="Hilfsmittel" className="w-[107px]" pad="pl-[13px]">
      <Big icon="measure" label="Abstand" caret className="w-[46px]" />
      <div className="ml-0.5 flex w-[36px] flex-col">
        <div className="flex h-[22px] w-6 items-center justify-center border border-[#6aa7de] bg-[#cfe6f9]"><Icon n="quick" className="size-[19px]" /></div>
        <div className="flex h-[22px] w-6 items-center justify-center"><Icon n="selbox" className="size-[17px]" /></div>
        <div className="flex h-[22px] items-center pl-[3px]"><Icon n="ucs" className="size-[17px]" /><Caret className="ml-[3px]" /></div>
      </div>
    </Panel>
    <Panel title="Vergleich" className="w-[80px] border-r-0 pr-1" pad="">
      <Big icon="compare" label="Dwg" label2="Vergleich" className="w-full" />
    </Panel>
  </div>
);

const CloseX = () => (
  <svg viewBox="0 0 10 10" className="w-[10px] shrink-0"><path d="M1 1l8 8M9 1L1 9" stroke="#777" strokeWidth="1.800" /></svg>
);

const DocTabs = () => (
  <div className="flex h-[18px] items-center bg-white text-[11.5px] tracking-[-0.4px] text-[#222]">
    <span className="w-[52px] pl-[12px]">Start</span>
    <CloseX />
    <div className="ml-[8px] flex h-full w-[98px] items-center bg-[#ececec] pl-[10px] font-bold tracking-[-0.350px] text-black">
      <span className="w-[73px]">Polylinien*</span>
      <CloseX />
    </div>
    <div className="flex h-full w-[31px] items-center justify-center border-r border-[#ddd] pl-1">
      <svg viewBox="0 0 10 10" className="size-[9px]"><path d="M5 0v10M0 5h10" stroke="#222" strokeWidth="1.400" /></svg>
    </div>
  </div>
);

// cusps of the revision cloud, in thirds of a pixel
const cusps = [
  [132, 73], [178, 54], [225, 44], [272, 46], [325, 46], [373, 54], [418, 63], [473, 63], [524, 61], [574, 63], [624, 63],
  [677, 63], [725, 54], [771, 46], [819, 46], [872, 46], [918, 44], [965, 62], [1011, 90], [1048, 120], [1085, 157],
  [1122, 193], [1145, 242], [1159, 288], [1161, 342], [1141, 387], [1102, 425], [1057, 443], [1013, 474], [963, 483],
  [919, 500], [873, 500], [817, 500], [760, 500], [706, 500], [660, 500], [612, 491], [565, 493], [510, 485], [463, 472],
  [418, 474], [373, 463], [325, 443], [280, 433], [233, 417], [187, 400], [160, 372], [111, 343], [77, 313], [54, 268],
  [36, 223], [38, 177], [58, 130], [88, 90],
];
const cloud = cusps.map(([x, y], i) => (i ? `A36 36 0 0 1 ${x} ${y}` : `M${x} ${y}`)).join("") + "A36 36 0 0 1 132 73Z";

const Drawing = () => (
  <svg viewBox="0 244 1590 654" className="h-[654px] w-[1590px]" fill="none" stroke="#1a0f9e">
    <path d="M56 304.500h160.500V373" stroke="#cf8f33" />
    <path d="M296 298.500h145a27.500 30 0 0 1 27.500 30V378" />
    <g fill="#0000f5" stroke="none">
      <path d="M537 308h210v4H537z" />
      <path d="M537 360h36v1h69v1h70v1h36v4h-36v1h-70v1h-69v1h-36z" />
      <path d="M1022 310h4v56h-4z" />
    </g>
    <path d="M869 310.500h154M1135.500 310.500h104v49h-104z" />
    <circle cx="1291" cy="337.500" r="15.300" stroke="#0000f5" strokeWidth="6.800" />
    <path d="M1391.600 305.300l36 14 6.200 39.700-30.500 24.500-36.900-14.200-6-40z" />
    <g transform="translate(1088 258) scale(.33333)"><path d={cloud} strokeWidth="3" /></g>

    {/* view rotation widget */}
    <circle cx="1540" cy="293.500" r="38" fill="#fbfbfb" stroke="#dadada" strokeWidth="1.500" />
    {[0, 45, 90, 135, 180, 225, 270, 315].map((a) => (
      <path key={a} transform={`rotate(${a} 1540 293.500)`} d="M1540 260.500l2.500 4.500h-5z" fill="#c4c4c4" stroke="none" />
    ))}

    {/* ucs icon */}
    <path d="M84.500 756v35M107 814.500h36" stroke="#000" />
    <path d="M84.500 791.500h23M84.500 814.500h23" stroke="#d37a90" />
    <path d="M84.500 791v23.500M107.500 791v23.500" stroke="#3cc79b" />
    <g stroke="none" fontFamily="Open Sans, sans-serif" fontSize="17" fontWeight="300" textAnchor="middle">
      <text x="84.500" y="749.500" fill="#2fc495">Y</text>
      <text x="98.500" y="809" fontSize="16" fill="#111">W</text>
      <text x="155" y="820.500" fill="#d37a90">X</text>
    </g>
    <path d="M176 797.500h64" stroke="#d37a90" />
    <path d="M207.500 765v64" stroke="#2fc9a0" />
  </svg>
);

const navPaths = ["M4 3v10M13 3v10L6 8z", "M11 3v10L5 8z", "M6 3v10l6-5z", "M13 3v10M4 3v10l7-5z"];

const ModelTabs = () => (
  <div className="flex h-[17px] items-center border-t border-[#ddd] bg-[#fcfcfc] text-[11px] tracking-[-0.1px] text-[#222]">
    {navPaths.map((d) => (
      <svg key={d} viewBox="0 0 17 16" className="h-4 w-[17px] border-r border-[#aaa]"><path d={d} fill="#111" stroke="#111" /></svg>
    ))}
    <svg viewBox="0 0 17 16" className="h-4 w-[17px]"><path d="M4.500 4h6v7h-6zM7.500 4v7" fill="#555" stroke="#111" strokeWidth="1.300" /></svg>
    <span className="flex h-full w-[40px] items-center justify-center bg-[#ececec] font-bold tracking-[-0.3px] text-black">Model</span>
    <span className="w-[52px] pl-[5px]">Layout1</span>
    <span className="w-[54px] pl-[5px]">Layout2</span>
    <span className="text-[13px]">+</span>
  </div>
);

const CommandLine = () => (
  <div className="flex h-[99px] border-t-2 border-[#555] bg-[#f0f0f0] font-['DejaVu_Sans_Mono',monospace] text-[11.630px]">
    <div className="flex w-2 shrink-0 flex-col items-center pt-1.5">
      <svg viewBox="0 0 8 8" className="size-[6px]"><path d="M1 1l6 6M7 1L1 7" stroke="#888" strokeWidth="2" /></svg>
      <DotsV className="mt-[24px] h-[18px]" />
    </div>
    <div className="flex flex-1 flex-col pt-[2px]">
      <div className="flex h-[77px]">
        <div className="flex-1 bg-[#808080] pt-[8px] pl-[5px] leading-[15px] whitespace-pre text-[#f2f2f2]">
          <div>Abbrechen</div>
          <div>:</div>
          <div>:</div>
          <div>: _pline</div>
        </div>
        <div className="flex w-[17px] flex-col items-center pt-[7px]">
          <svg viewBox="0 0 8 6" className="h-[6px] w-2"><path d="M1 5l3-4 3 4" fill="none" stroke="#333" strokeWidth="1.800" /></svg>
          <div className="mt-[29px] h-[17px] w-[15px] bg-[#c4c4c4]" />
          <svg viewBox="0 0 8 6" className="mt-[7px] h-[6px] w-2"><path d="M1 1l3 4 3-4" fill="none" stroke="#333" strokeWidth="1.800" /></svg>
        </div>
      </div>
      <div className="flex flex-1 items-center bg-[#323637] pl-px whitespace-pre text-[#f2f2f2]">
        Beginn der Polylinie festlegen oder [
        <span className="bg-[#7b808a] leading-[14px]"><span className="text-[#d9c54a]">F</span>olgen</span>
        {"] <"}
        <span className="bg-[#7b808a] leading-[14px]">Letzter Punkt</span>
        {">:"}
      </div>
    </div>
  </div>
);

type Row = { k: string; v?: string; head?: boolean; plus?: boolean; muted?: boolean; line?: boolean; swatch?: boolean };

const rows: Row[] = [
  { k: "Allgemein", head: true },
  { k: "Farbe", v: "VonLayer", swatch: true },
  { k: "Layer", v: "Polylinie" },
  { k: "Linientyp", v: "VonLayer", line: true },
  { k: "Linientypfaktor", v: "1" },
  { k: "Linienstärke", v: "VonLayer", line: true },
  { k: "Transparenz", v: "VonLayer" },
  { k: "Erhebung", v: "0 mm" },
  { k: "Ansicht", head: true },
  { k: "Kamera", v: "0, 0, 1", plus: true },
  { k: "Ziel", v: "0, 0, 0", plus: true },
  { k: "Perspektive", v: "Aus" },
  { k: "Brennweite", v: "50 mm" },
  { k: "Blickfeld", v: "38.58" },
  { k: "Höhe", v: "212.14 mm", muted: true },
  { k: "Breite", v: "515.76 mm", muted: true },
  { k: "Zuschneiden", v: "Aus" },
  { k: "Vordere Ebene", v: "1 mm" },
  { k: "Hintere Ebene", v: "0 mm" },
  { k: "Visueller Stil", v: "2D Drahtmodell" },
  { k: "Gemischt", head: true },
  { k: "Beschriftungs Ska", v: "1:1" },
  { k: "Standard-Beleuc", v: "Aus" },
];

const Expander = ({ plus }: { plus?: boolean }) => (
  <svg viewBox="0 0 9 9" className="size-[9px]">
    <path d="M.5.5h8v8h-8z" fill="#fff" stroke="#8a8a8a" />
    <path d={plus ? "M2 4.500h5M4.500 2v5" : "M2 4.500h5"} stroke="#444" />
  </svg>
);

const Properties = () => (
  <div className="flex w-[281px] shrink-0 flex-col bg-white pl-[5px] font-['DejaVu_Sans_Condensed','DejaVu_Sans',sans-serif] text-[11px] tracking-[-0.2px] text-[#1a1a1a]">
    <div className="flex h-[30px] shrink-0 items-center">
      <div className="flex h-[23px] w-[226px] items-center border border-[#dcdcdc] pl-0.5 font-['Open_Sans',sans-serif] text-[11.500px] tracking-[-0.300px]">
        <span className="flex-1">Keine Auswahl</span>
        <Chevron />
      </div>
      <Icon n="filter" className="ml-[3px] size-[18px]" />
      <div className="ml-[3px] flex h-[21px] w-[23px] items-center justify-center border border-[#a9d0f0] bg-[#cfe6f9]"><Icon n="eye" className="size-[17px]" /></div>
    </div>
    {rows.map((r) => (
      <div key={r.k} className="flex h-[18px] shrink-0 whitespace-nowrap">
        <div className="flex w-[12px] shrink-0 items-center">{(r.head || r.plus) && <Expander plus={r.plus} />}</div>
        {r.head ? (
          <div className="flex flex-1 items-center bg-[#d6d6d6] pt-0.5 pl-1 text-[11.500px] font-bold text-black">{r.k}</div>
        ) : (
          <div className="flex flex-1 items-center border-b border-l border-[#d9d9d9] pt-px pl-[3px]">
            <div className="flex h-full w-[82px] items-center overflow-hidden border-r border-[#d9d9d9] pt-px">{r.k}</div>
            {r.swatch && <div className="mr-[6px] ml-[6px] size-[13px] border border-[#222] bg-[#0000f5]" />}
            {r.line && <div className="mr-[4px] ml-[7px] h-px w-[88px] bg-black" />}
            <span className={clsx("pt-px", !r.swatch && !r.line && "pl-1", r.muted && "text-[#8f8f8f]")}>{r.v}</span>
          </div>
        )}
      </div>
    ))}
  </div>
);

const side: { n: string; h: string; d: ReactNode }[] = [
  { n: "tips", h: "h-[52px]", d: <><path d="M10 19c0-4-6-5-6-10a8.500 8.500 0 0 1 17 0c0 5-6 6-6 10" /><path d="M10.500 19.500h4v4h-4z" fill="#999" /></> },
  { n: "props", h: "h-12 bg-white", d: <><path d="M0 4h5M10 4h14M0 12h16M21 12h3M0 20h9M14 20h10" /><circle cx="7.500" cy="4" r="2.300" /><circle cx="18.500" cy="12" r="2.300" /><circle cx="11.500" cy="20" r="2.300" /></> },
  { n: "layers", h: "h-[49px]", d: <path d="M12 1l11 6-11 6L1 7zM1 12l11 6 11-6M1 17l11 6 11-6" /> },
  { n: "attach", h: "h-[51px]", d: <path d="M9.500 8v9a2.500 2.500 0 0 0 5 0V6a4 4 0 0 0-8 0v12a5.500 5.500 0 0 0 11 0V6" /> },
  { n: "hatch", h: "h-[50px]", d: <path d="M1 1v22h22zM4.500 11v8.500H13zM1 1h22v22M8 1v7M13 1v12M18 1v17M8 6h15M13 11h10M18 17h5" /> },
  { n: "fx", h: "h-[49px]", d: null },
  { n: "tree", h: "h-[51px]", d: <path d="M1 1h11v5H1zM6 6v15h5M6 13h5M11 10h12v5H11zM11 18h12v5H11z" /> },
  { n: "cloud", h: "h-[50px]", d: <path d="M8 19H5a4.500 4.500 0 0 1 0-9 7 7 0 0 1 13-1 5 5 0 0 1 1 10H8M12 17v-6M9 13.500l3-3 3 3" /> },
  { n: "blocks", h: "h-[49px]", d: <path d="M3 2h7v7H3zM15 2h7v7h-7zM3 14h7v6H3zM15 14h7v6h-7zM3 11.500h7M15 11.500h7M3 23h7M15 23h7" /> },
];

const SideBar = () => (
  <div className="flex flex-1 flex-col bg-[#f0f0f0]">
    {side.map((s) => (
      <div key={s.n} className={clsx("flex shrink-0 items-center justify-center pt-px pl-[6px]", s.h)}>
        {s.n === "fx" ? (
          <span className="pb-1 font-['Liberation_Serif',serif] text-[20px] tracking-[0.300px] text-[#777] italic">f<span className="text-[17px]">(x)</span></span>
        ) : (
          <svg viewBox="0 0 24 24" className="size-6" fill="none" stroke="#7c7c7c" strokeWidth="1.200">{s.d}</svg>
        )}
      </div>
    ))}
  </div>
);

const status: [string, string][] = [
  ["55, 118, 0", "w-[158px] justify-end pr-[6px]"],
  ["Standard", "w-[52px]"],
  ["ISO-25", "w-[43px]"],
  ["Konstruieren", "w-[71px] pr-1"],
  ["FANG", "w-[39px] text-[#bdbdbd]"],
  ["RASTER", "w-[49px] text-[#bdbdbd]"],
  ["ORTHO", "w-[44px] text-[#bdbdbd]"],
  ["POLAR", "w-[42px] text-[#bdbdbd]"],
  ["OFANG", "w-[44px] on"],
  ["OTRACK", "w-[49px] on"],
  ["LST", "w-[23px] text-[#bdbdbd]"],
  ["MODELL", "w-[51px]"],
  ["1:1", "w-[25px]"],
  ["DBKS", "w-[33px] text-[#bdbdbd]"],
  ["DYN", "w-[29px] text-[#bdbdbd]"],
  ["QUAD", "w-[38px] text-[#bdbdbd]"],
  ["RT", "w-[22px] text-[#bdbdbd]"],
  ["HKA", "w-[28px] text-[#bdbdbd]"],
  ["UISPERREN", "w-[66px] text-[#bdbdbd]"],
];

const StatusBar = () => (
  <div className="flex h-[19px] shrink-0 items-center bg-[#fcfcfc] pt-px font-['DejaVu_Sans_Condensed','DejaVu_Sans',sans-serif] text-[10.800px] tracking-[-0.180px] text-[#333]">
    <span className="flex h-4 w-[918px] items-center border-r border-[#ddd] pl-0.5 text-[#666]">Bereit</span>
    {status.map(([t, c]) => (
      <span key={t} className={clsx("flex h-4 shrink-0 items-center justify-center border-r border-[#ddd]", c)}>
        {c.endsWith("on") ? <span className="bg-[#cfcfcf] leading-[14px]">{t}</span> : t}
      </span>
    ))}
    <span className="w-[38px] pl-[3px]">Keine</span>
    <Caret />
    <svg viewBox="0 0 10 10" className="mr-[2px] ml-auto w-2"><path d="M8 0v2M8 4v2M8 8v2M4 4v2M4 8v2M0 8v2" stroke="#aaa" strokeWidth="2" /></svg>
  </div>
);

export default function App() {
  return (
    <div className="flex h-[1036px] w-[1916px] flex-col overflow-hidden bg-white font-['Open_Sans',sans-serif]">
      <div className="flex h-[18px] items-start border-t border-black pl-1 text-[12.500px] leading-[10px] tracking-[-0.400px] text-[#111]">
        <Logo className="mr-2 h-[11px] w-[11px]" />
        <span>BricsCAD Ultimate (Lizenz, NICHT ZUM WIEDERVERKAUF) - [Polylinien.dwg]</span>
        <svg viewBox="0 0 110 12" className="ml-auto h-3 w-[110px]" fill="none" stroke="#111" strokeWidth="1.200">
          <path d="M0 3.500h9M46.500 1.500h6v6h-6zM48 1V0h6v7h-1M91-1l10 10M101-1L91 9" />
        </svg>
        <div className="w-[7px]" />
      </div>
      <MenuBar />
      <Toolbars />
      <div className="flex h-[29px] items-end">
        <div className="h-full w-[8px] bg-[#f0f0f0]" />
        <Logo className="h-[27px] w-7 self-start" />
        {ribbonTabs.map(([t, c]) => (
          <div key={t} className={clsx("flex h-full shrink-0 items-center justify-center text-[12.500px] text-[#222]", c)}>{t}</div>
        ))}
      </div>
      <Ribbon />
      <div className="flex h-[790px]">
        <div className="flex w-[1591px] shrink-0 flex-col">
          <DocTabs />
          <div className="border-t border-r border-[#555]">
            <Drawing />
            <ModelTabs />
          </div>
          <CommandLine />
        </div>
        <div className="flex flex-1 flex-col">
          <div className="flex h-2 items-center bg-[#ececec] pl-[151px]"><div className="h-0 w-[19px] border-t-2 border-dotted border-[#333]" /></div>
          <div className="flex flex-1">
            <Properties />
            <SideBar />
          </div>
        </div>
      </div>
      <StatusBar />
      <div className="flex h-[2px] bg-[#4a4a4c]"><div className="ml-12 w-[344px] bg-[#c4c4c4]" /></div>
    </div>
  );
}
